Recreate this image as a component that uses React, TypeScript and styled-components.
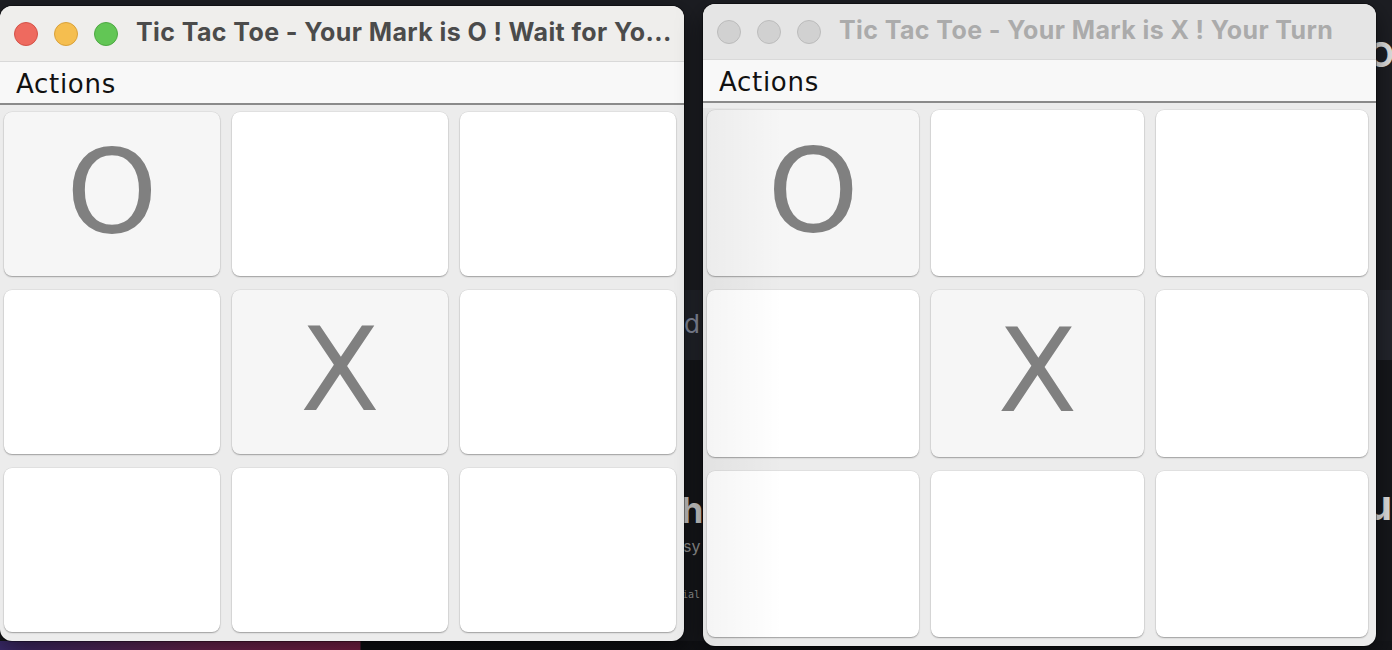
import React from 'react';
import styled, { createGlobalStyle } from 'styled-components';

type Mark = 'X' | 'O' | '';

interface GameWindow {
  id: string;
  title: string;
  active: boolean;
  left: number;
  top: number;
  width: number;
  height: number;
  board: Mark[];
}

const windows: GameWindow[] = [
  {
    id: 'player-o',
    title: 'Tic Tac Toe - Your Mark is O ! Wait for Yo...',
    active: true,
    left: 0,
    top: 6,
    width: 684,
    height: 635,
    board: ['O', '', '', '', 'X', '', '', '', ''],
  },
  {
    id: 'player-x',
    title: 'Tic Tac Toe - Your Mark is X ! Your Turn',
    active: false,
    left: 703,
    top: 4,
    width: 673,
    height: 642,
    board: ['O', '', '', '', 'X', '', '', '', ''],
  },
];

const GlobalStyle = createGlobalStyle`
  html, body {
    margin: 0;
    padding: 0;
    background: #1b1c21;
  }
  * {
    box-sizing: border-box;
  }
`;

const Desktop = styled.div`
  position: relative;
  width: 1392px;
  height: 650px;
  overflow: hidden;
  background: #1b1c21;
  font-family: 'Inter', 'Liberation Sans', sans-serif;
`;

// what shows of the apps behind the two game windows
const Backdrop = styled.div`
  position: absolute;
  inset: 0;
  display: grid;
  grid-template-rows: 290px 70px 1fr 9px;
`;

const BackdropBand = styled.div<{ $tone: string }>`
  background: ${p => p.$tone};
`;

const BackdropFloor = styled.div`
  background: linear-gradient(90deg, #3a2a6a 0px, #6a2550 200px, #7a2046 360px, #0e0f12 361px, #141519 100%);
`;

const Fragment = styled.span<{ $x: number; $y: number; $size: number; $color: string; $weight?: number; $mono?: boolean }>`
  position: absolute;
  left: ${p => p.$x}px;
  top: ${p => p.$y}px;
  font-size: ${p => p.$size}px;
  font-weight: ${p => p.$weight ?? 400};
  font-family: ${p => (p.$mono ? "'DejaVu Sans Mono', monospace" : "'Inter', sans-serif")};
  color: ${p => p.$color};
  line-height: 1;
`;

const Window = styled.section`
  position: absolute;
  display: flex;
  flex-direction: column;
  border-radius: 12px;
  overflow: hidden;
  background: #ececec;
  box-shadow: 0 0 0 1px rgba(0, 0, 0, 0.35), 0 8px 24px rgba(0, 0, 0, 0.5);
`;

const TitleBar = styled.header<{ $active: boolean }>`
  height: 56px;
  flex: none;
  display: flex;
  align-items: center;
  padding-left: 14px;
  gap: 16px;
  background: ${p => (p.$active ? '#efeeec' : '#e5e5e5')};
  border-bottom: 1px solid #d9d9d9;
`;

const Lights = styled.div`
  display: flex;
  gap: 16px;
  padding-top: 1px;
`;

const Light = styled.span<{ $fill: string; $edge: string }>`
  width: 24px;
  height: 24px;
  border-radius: 50%;
  background: ${p => p.$fill};
  border: 1px solid ${p => p.$edge};
`;

const Title = styled.h1<{ $active: boolean }>`
  margin: 0 0 3px 2px;
  font-size: 25px;
  font-weight: 700;
  letter-spacing: 0.4px;
  white-space: nowrap;
  color: ${p => (p.$active ? '#4b4b4b' : '#ababab')};
`;

const MenuBar = styled.nav`
  height: 43px;
  flex: none;
  display: flex;
  align-items: center;
  padding: 2px 16px 0;
  background: #f8f8f8;
  border-bottom: 2px solid #8a8a8a;
`;

const MenuItem = styled.span`
  font-family: 'DejaVu Sans', 'Liberation Sans', sans-serif;
  font-size: 26px;
  letter-spacing: 0.7px;
  color: #111;
`;

const Board = styled.div`
  flex: 1;
  display: grid;
  grid-template-columns: repeat(3, 1fr);
  grid-template-rows: repeat(3, 1fr);
  column-gap: 12px;
  row-gap: 14px;
  padding: 7px 8px 9px 4px;
`;

const Cell = styled.button<{ $filled: boolean }>`
  border: none;
  padding: 0 0 5px;
  border-radius: 8px;
  background: ${p => (p.$filled ? '#f6f6f6' : '#ffffff')};
  box-shadow: 0 0 0 0.5px rgba(0, 0, 0, 0.08), 0 1px 1.5px rgba(0, 0, 0, 0.3);
  display: flex;
  align-items: center;
  justify-content: center;
  font-family: 'DejaVu Sans', 'Liberation Sans', sans-serif;
  font-size: 116px;
  font-weight: 400;
  color: #808080;
  line-height: 1;
`;

const Shade = styled.div`
  position: absolute;
  left: 0;
  top: 104px;
  bottom: 0;
  width: 80px;
  pointer-events: none;
  background: linear-gradient(90deg, rgba(0, 0, 0, 0.045), rgba(0, 0, 0, 0));
`;

const GameFrame: React.FC<{ win: GameWindow }> = ({ win }) => {
  const lights = win.active
    ? [
        { fill: '#ee6a5f', edge: '#d45248' },
        { fill: '#f5be4f', edge: '#d9a13a' },
        { fill: '#62c655', edge: '#4ea843' },
      ]
    : [
        { fill: '#d1d1d1', edge: '#bcbcbc' },
        { fill: '#d1d1d1', edge: '#bcbcbc' },
        { fill: '#d1d1d1', edge: '#bcbcbc' },
      ];

  return (
    <Window style={{ left: win.left, top: win.top, width: win.width, height: win.height }}>
      <TitleBar $active={win.active}>
        <Lights>
          {lights.map((l, i) => (
            <Light key={i} $fill={l.fill} $edge={l.edge} />
          ))}
        </Lights>
        <Title $active={win.active}>{win.title}</Title>
      </TitleBar>
      <MenuBar>
        <MenuItem>Actions</MenuItem>
      </MenuBar>
      <Board>
        {win.board.map((mark, i) => (
          <Cell key={i} $filled={mark !== ''}>
            {mark}
          </Cell>
        ))}
      </Board>
      {!win.active && <Shade />}
    </Window>
  );
};

const App: React.FC = () => {
  return (
    <>
      <GlobalStyle />
      <Desktop>
        <Backdrop>
          <BackdropBand $tone="#1d1e23" />
          <BackdropBand $tone="#23252c" />
          <BackdropBand $tone="#16171b" />
          <BackdropFloor />
        </Backdrop>
        <Fragment $x={684} $y={311} $size={26} $color="#8d93a6">d</Fragment>
        <Fragment $x={681} $y={492} $size={36} $color="#d8d8d8" $weight={700}>h</Fragment>
        <Fragment $x={683} $y={538} $size={16} $color="#9a9a9a">sy</Fragment>
        <Fragment $x={676} $y={590} $size={10} $color="#9a9a9a" $mono>rial</Fragment>
        <Fragment $x={1368} $y={38} $size={34} $color="#e0e0e0" $weight={700}>O</Fragment>
        <Fragment $x={1366} $y={484} $size={42} $color="#e0e0e0" $weight={700}>u</Fragment>
        {windows.map(w => (
          <GameFrame key={w.id} win={w} />
        ))}
      </Desktop>
    </>
  );
};

export default App;
